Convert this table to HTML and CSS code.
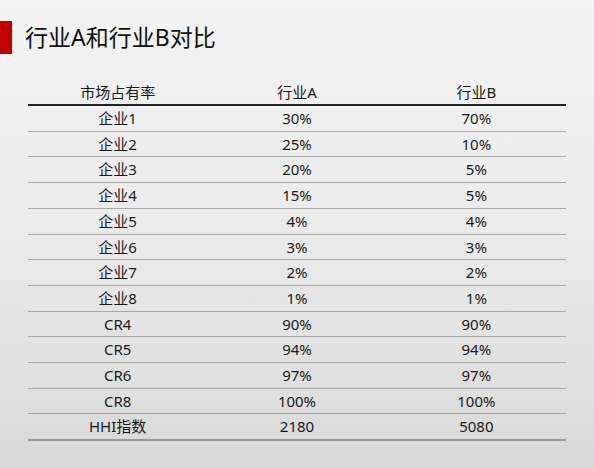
FILE: index.html
```html
<!DOCTYPE html>
<html lang="zh">
<head>
<meta charset="utf-8">
<link rel="stylesheet" href="styles.css">
</head>
<body>
<div class="slide">
  <div class="title-row">
    <div class="accent"></div>
    <h1 class="title">行业A和行业B对比</h1>
  </div>
  <table class="data">
    <thead>
      <tr><th>市场占有率</th><th>行业A</th><th>行业B</th></tr>
    </thead>
    <tbody>
      <tr><td>企业1</td><td>30%</td><td>70%</td></tr>
      <tr><td>企业2</td><td>25%</td><td>10%</td></tr>
      <tr><td>企业3</td><td>20%</td><td>5%</td></tr>
      <tr><td>企业4</td><td>15%</td><td>5%</td></tr>
      <tr><td>企业5</td><td>4%</td><td>4%</td></tr>
      <tr><td>企业6</td><td>3%</td><td>3%</td></tr>
      <tr><td>企业7</td><td>2%</td><td>2%</td></tr>
      <tr><td>企业8</td><td>1%</td><td>1%</td></tr>
      <tr><td>CR4</td><td>90%</td><td>90%</td></tr>
      <tr><td>CR5</td><td>94%</td><td>94%</td></tr>
      <tr><td>CR6</td><td>97%</td><td>97%</td></tr>
      <tr><td>CR8</td><td>100%</td><td>100%</td></tr>
      <tr class="last"><td>HHI指数</td><td>2180</td><td>5080</td></tr>
    </tbody>
  </table>
</div>
</body>
</html>
```
FILE: styles.css
```css
html, body {
  margin: 0;
  padding: 0;
}
body {
  width: 594px;
  height: 468px;
  overflow: hidden;
  background: linear-gradient(180deg, #f3f3f3 0%, #ececec 45%, #d9d9d9 100%);
  font-family: "Noto Sans", "Noto Sans CJK SC", sans-serif;
  color: #1a1a1a;
}
.slide {
  padding-top: 21px;
}
.title-row {
  display: flex;
  align-items: center;
  height: 33px;
}
.accent {
  width: 12px;
  height: 33px;
  background: #c00000;
}
.title {
  margin: 0 0 0 13px;
  font-size: 23px;
  font-weight: 400;
  line-height: 33px;
  color: #111;
}
.data {
  margin: 27px 0 0 28px;
  width: 538px;
  border-collapse: collapse;
  table-layout: fixed;
  font-size: 15px;
}
.data th, .data td {
  width: 33.33%;
  text-align: center;
  padding: 0;
  font-weight: 400;
}
.data th {
  height: 23px;
  line-height: 23px;
  border-bottom: 2.5px solid #222;
}
.data td {
  height: 24.7px;
  line-height: 24.7px;
  border-bottom: 1px solid #a8a8a8;
}
.data tr.last td {
  border-bottom: 2px solid #9a9a9a;
}
```
